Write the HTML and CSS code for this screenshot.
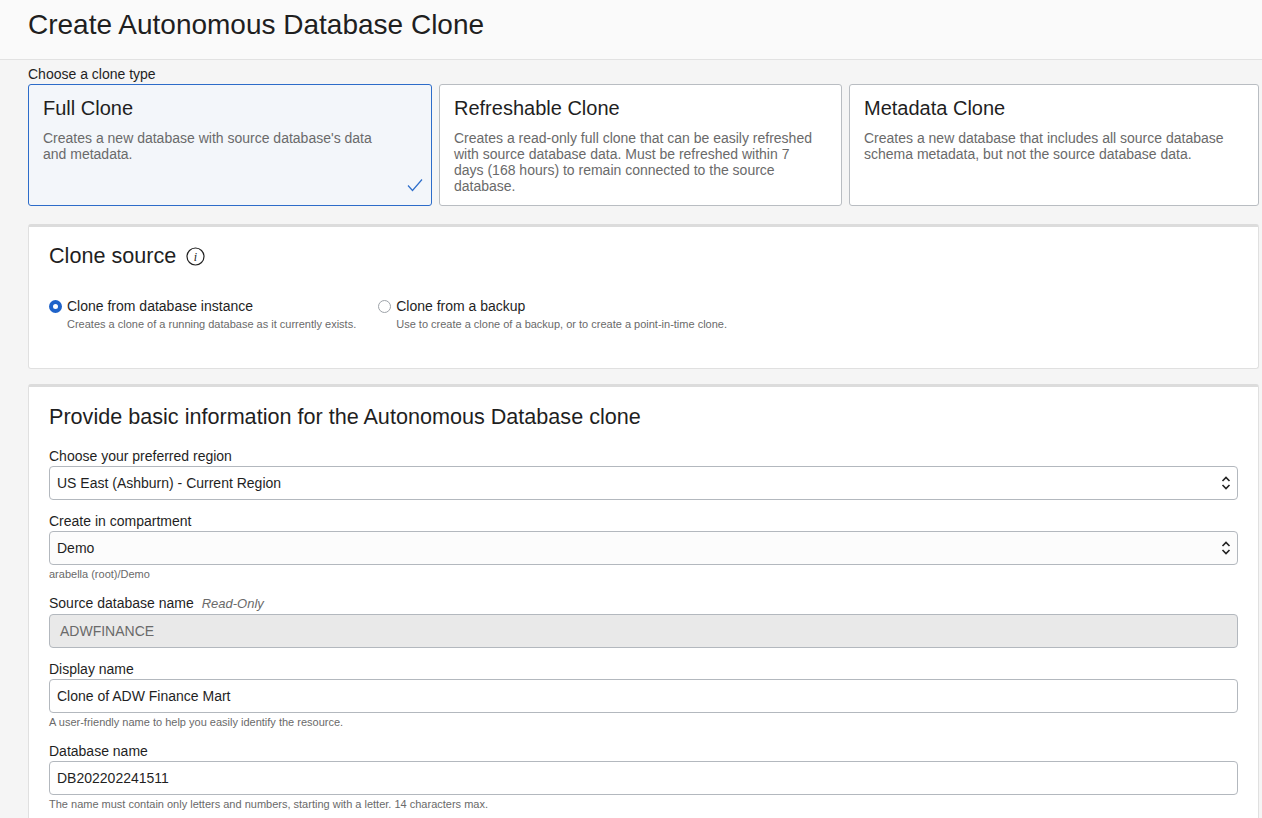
FILE: index.html
```html
<!DOCTYPE html>
<html lang="en">
<head>
<meta charset="utf-8">
<title>Create Autonomous Database Clone</title>
<link rel="stylesheet" href="styles.css">
</head>
<body>
<header class="page-header">
  <h1 class="page-title">Create Autonomous Database Clone</h1>
</header>
<main class="content">
  <div class="clone-type-label">Choose a clone type</div>
  <div class="cards">
    <div class="card selected">
      <div class="card-title">Full Clone</div>
      <div class="card-desc">Creates a new database with source database's data and metadata.</div>
      <svg class="card-check" width="16" height="14" viewBox="0 0 16 14"><path d="M1 7.5 L5.5 12.5 L15 1.5" fill="none" stroke="#2f6fcb" stroke-width="1.2"/></svg>
    </div>
    <div class="card">
      <div class="card-title">Refreshable Clone</div>
      <div class="card-desc">Creates a read-only full clone that can be easily refreshed with source database data. Must be refreshed within 7 days (168 hours) to remain connected to the source database.</div>
    </div>
    <div class="card">
      <div class="card-title">Metadata Clone</div>
      <div class="card-desc">Creates a new database that includes all source database schema metadata, but not the source database data.</div>
    </div>
  </div>

  <section class="panel panel-source">
    <h2 class="panel-title">Clone source
      <svg class="info-icon" width="19" height="19" viewBox="0 0 19 19"><circle cx="9.5" cy="9.5" r="8.5" fill="none" stroke="#222" stroke-width="1.2"/><text x="9.5" y="13.6" text-anchor="middle" font-family="Liberation Serif, serif" font-style="italic" font-size="12" fill="#222">i</text></svg>
    </h2>
    <div class="radios">
      <div class="radio-opt">
        <span class="radio checked"></span>
        <div>
          <div class="radio-label">Clone from database instance</div>
          <div class="radio-help">Creates a clone of a running database as it currently exists.</div>
        </div>
      </div>
      <div class="radio-opt">
        <span class="radio"></span>
        <div>
          <div class="radio-label">Clone from a backup</div>
          <div class="radio-help">Use to create a clone of a backup, or to create a point-in-time clone.</div>
        </div>
      </div>
    </div>
  </section>

  <section class="panel panel-basic">
    <h2 class="panel-title">Provide basic information for the Autonomous Database clone</h2>

    <div class="field first">
      <div class="field-label">Choose your preferred region</div>
      <div class="control select">US East (Ashburn) - Current Region
        <svg class="chev" width="10" height="14" viewBox="0 0 10 14"><path d="M1.5 5 L5 1.5 L8.5 5 M1.5 9 L5 12.5 L8.5 9" fill="none" stroke="#222" stroke-width="1.6"/></svg>
      </div>
    </div>

    <div class="field">
      <div class="field-label">Create in compartment</div>
      <div class="control select soft">Demo
        <svg class="chev" width="10" height="14" viewBox="0 0 10 14"><path d="M1.5 5 L5 1.5 L8.5 5 M1.5 9 L5 12.5 L8.5 9" fill="none" stroke="#222" stroke-width="1.6"/></svg>
      </div>
      <div class="field-help">arabella (root)/Demo</div>
    </div>

    <div class="field">
      <div class="field-label">Source database name <span class="ro">Read-Only</span></div>
      <div class="control readonly">ADWFINANCE</div>
    </div>

    <div class="field">
      <div class="field-label">Display name</div>
      <div class="control">Clone of ADW Finance Mart</div>
      <div class="field-help">A user-friendly name to help you easily identify the resource.</div>
    </div>

    <div class="field">
      <div class="field-label">Database name</div>
      <div class="control">DB202202241511</div>
      <div class="field-help">The name must contain only letters and numbers, starting with a letter. 14 characters max.</div>
    </div>
  </section>
</main>
</body>
</html>
```

FILE: styles.css
```css
* { box-sizing: border-box; }

html, body {
  margin: 0;
  padding: 0;
}

body {
  background: #f5f5f5;
  font-family: "Liberation Sans", Arial, sans-serif;
  color: #1f1f1f;
  overflow: hidden;
}

.page-header {
  height: 60px;
  background: #fafafa;
  border-bottom: 1px solid #e2e2e2;
  padding: 7px 0 0 28px;
}

.page-title {
  margin: 0;
  font-size: 28px;
  line-height: 36px;
  font-weight: normal;
  color: #1f1f1f;
}

.content {
  padding: 6px 3px 0 28px;
}

.clone-type-label {
  font-size: 14px;
  line-height: 16px;
  color: #1f1f1f;
  margin-bottom: 2px;
}

.cards {
  display: grid;
  grid-template-columns: 404px 403px 410px;
  column-gap: 7px;
}

.card {
  position: relative;
  height: 122px;
  background: #fff;
  border: 1px solid #b9bdc2;
  border-radius: 3px;
  padding: 11px 14px 0 14px;
}

.card.selected {
  background: #f3f6fa;
  border-color: #2d6cc9;
}

.card-title {
  font-size: 20px;
  line-height: 24px;
  color: #1f1f1f;
}

.card-desc {
  margin-top: 10px;
  font-size: 14px;
  line-height: 16px;
  color: #6a6a6a;
  max-width: 364px;
}

.card.selected .card-desc {
  max-width: 340px;
}

.card-check {
  position: absolute;
  right: 8px;
  bottom: 13px;
}

.panel {
  background: #fff;
  border: 1px solid #e0e0e0;
  border-top: 3px solid #dcdcdc;
  border-radius: 3px;
  padding: 17px 20px 0 20px;
}

.panel-source {
  margin-top: 18px;
  height: 145px;
}

.panel-basic {
  margin-top: 15px;
  padding-top: 18px;
  padding-bottom: 12px;
}

.panel-title {
  margin: 0;
  font-size: 21.6px;
  line-height: 24px;
  font-weight: normal;
  color: #1f1f1f;
  display: flex;
  align-items: center;
  gap: 10px;
}

.info-icon {
  display: block;
  margin-top: 1px;
}

.radios {
  display: flex;
  margin-top: 29px;
}

.radio-opt {
  display: flex;
  align-items: flex-start;
  gap: 5px;
}

.radio-opt + .radio-opt {
  margin-left: 22px;
}

.radio {
  width: 13px;
  height: 13px;
  border-radius: 50%;
  border: 1px solid #9ea3a9;
  background: #fff;
  margin-top: 3px;
  flex: none;
}

.radio.checked {
  border: 4px solid #1f63c9;
  background: #fff;
}

.radio-label {
  font-size: 14px;
  line-height: 18px;
  color: #1f1f1f;
}

.radio-help {
  margin-top: 2px;
  font-size: 11px;
  line-height: 14px;
  color: #6a6a6a;
}

.field {
  margin-top: 12px;
}

.field.first {
  margin-top: 18px;
}

.field-label {
  font-size: 14px;
  line-height: 18px;
  color: #1f1f1f;
  margin-bottom: 1px;
}

.ro {
  font-style: italic;
  font-size: 13px;
  color: #6a6a6a;
  margin-left: 4px;
}

.control {
  position: relative;
  height: 34px;
  border: 1px solid #b3b8be;
  border-radius: 4px;
  background: #fff;
  padding: 0 7px;
  font-size: 14px;
  line-height: 33px;
  color: #1f1f1f;
}

.control.soft {
  background: #fcfcfc;
}

.control.readonly {
  background: #e9e9e9;
  color: #6a6a6a;
  padding-left: 10px;
}

.chev {
  position: absolute;
  right: 6px;
  top: 9px;
}

.field-help {
  margin-top: 2px;
  padding-bottom: 1px;
  font-size: 11px;
  line-height: 14px;
  color: #6a6a6a;
}
```
